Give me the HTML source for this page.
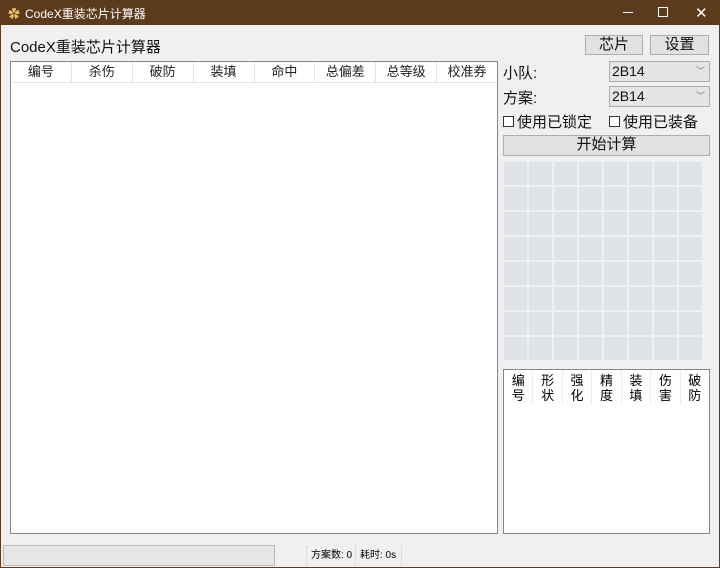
<!DOCTYPE html><html><head><meta charset="utf-8"><style>
*{margin:0;padding:0;box-sizing:border-box}
body{width:720px;height:568px;background:#f0f0f0;font-family:"Liberation Sans","Noto Sans CJK SC",sans-serif;position:relative;overflow:hidden}
.a{position:absolute}
.tb{left:0;top:0;width:720px;height:25px;background:#5c3a1c;color:#fff;font-size:12px}
.btn{background:#e1e1e1;border:1px solid #adadad;text-align:center;font-size:15px;line-height:18px;color:#111}
.lst{background:#fff;border:1px solid #828790}
.hd{display:flex;height:21px;border-bottom:1px solid #e5e5e5}
.hd div{flex:1;text-align:center;font-size:13px;line-height:20px;border-right:1px solid #e5e5e5;color:#222}
.cb{background:#e5e5e5;border:1px solid #adadad;font-size:14px;line-height:18px;padding-left:2px;color:#111}
.cb span{position:absolute;right:4px;top:0;font-size:9px;color:#777}
.lbl{font-size:15px;color:#111}
.grid{display:grid;grid-template-columns:repeat(8,23px);grid-auto-rows:23px;gap:2px}
.grid div{background:#dfe3e8}
.h2{display:flex}
.h2 div{flex:1;text-align:center;font-size:13px;line-height:15px;border-right:1px solid #eee;height:34px;padding-top:3px}
</style></head><body>
<div class="a" style="left:0;top:0;width:720px;height:568px;border:1px solid #5c3a1c"></div>
<div class="a tb"><span class="a" style="left:8px;top:5px;color:#f3c060">✿</span><span class="a" style="left:25px;top:5px">CodeX重装芯片计算器</span>
<span class="a" style="left:623px;top:12px;width:10px;height:1px;background:#fff"></span><span class="a" style="left:658px;top:7px;width:10px;height:10px;border:1px solid #fff"></span><span class="a" style="left:695px;top:4px;font-size:15px">✕</span></div>
<div class="a" style="left:10px;top:36px;font-size:15px;color:#111">CodeX重装芯片计算器</div>
<div class="a btn" style="left:585px;top:35px;width:58px;height:20px">芯片</div>
<div class="a btn" style="left:650px;top:35px;width:59px;height:20px">设置</div>
<div class="a lst" style="left:10px;top:61px;width:488px;height:473px"><div class="hd"><div>编号</div><div>杀伤</div><div>破防</div><div>装填</div><div>命中</div><div>总偏差</div><div>总等级</div><div style="border:none">校准券</div></div></div>
<div class="a lbl" style="left:503px;top:62px">小队:</div>
<div class="a cb" style="left:609px;top:61px;width:101px;height:21px">2B14<span>﹀</span></div>
<div class="a lbl" style="left:503px;top:87px">方案:</div>
<div class="a cb" style="left:609px;top:86px;width:101px;height:21px">2B14<span>﹀</span></div>
<div class="a lbl" style="left:503px;top:111px"><span style="display:inline-block;width:11px;height:11px;border:1px solid #333;background:#fff;margin-right:3px"></span>使用已锁定</div>
<div class="a lbl" style="left:609px;top:111px"><span style="display:inline-block;width:11px;height:11px;border:1px solid #333;background:#fff;margin-right:3px"></span>使用已装备</div>
<div class="a btn" style="left:503px;top:135px;width:207px;height:21px">开始计算</div>
<div class="a grid" style="left:504px;top:162px">
<div></div><div></div><div></div><div></div><div></div><div></div><div></div><div></div>
<div></div><div></div><div></div><div></div><div></div><div></div><div></div><div></div>
<div></div><div></div><div></div><div></div><div></div><div></div><div></div><div></div>
<div></div><div></div><div></div><div></div><div></div><div></div><div></div><div></div>
<div></div><div></div><div></div><div></div><div></div><div></div><div></div><div></div>
<div></div><div></div><div></div><div></div><div></div><div></div><div></div><div></div>
<div></div><div></div><div></div><div></div><div></div><div></div><div></div><div></div>
<div></div><div></div><div></div><div></div><div></div><div></div><div></div><div></div>
</div>
<div class="a lst" style="left:503px;top:369px;width:207px;height:165px"><div class="h2"><div>编<br>号</div><div>形<br>状</div><div>强<br>化</div><div>精<br>度</div><div>装<br>填</div><div>伤<br>害</div><div style="border:none">破<br>防</div></div></div>
<div class="a" style="left:3px;top:545px;width:272px;height:21px;background:#e6e6e6;border:1px solid #bcbcbc"></div>
<div class="a" style="left:306px;top:545px;width:50px;height:21px;border-left:1px solid #ddd;border-right:1px solid #ddd;font-size:10px;line-height:21px;padding-left:4px">方案数: 0</div>
<div class="a" style="left:357px;top:545px;width:45px;height:21px;border-right:1px solid #ddd;font-size:10px;line-height:21px;padding-left:3px">耗时: 0s</div>
</body></html>
